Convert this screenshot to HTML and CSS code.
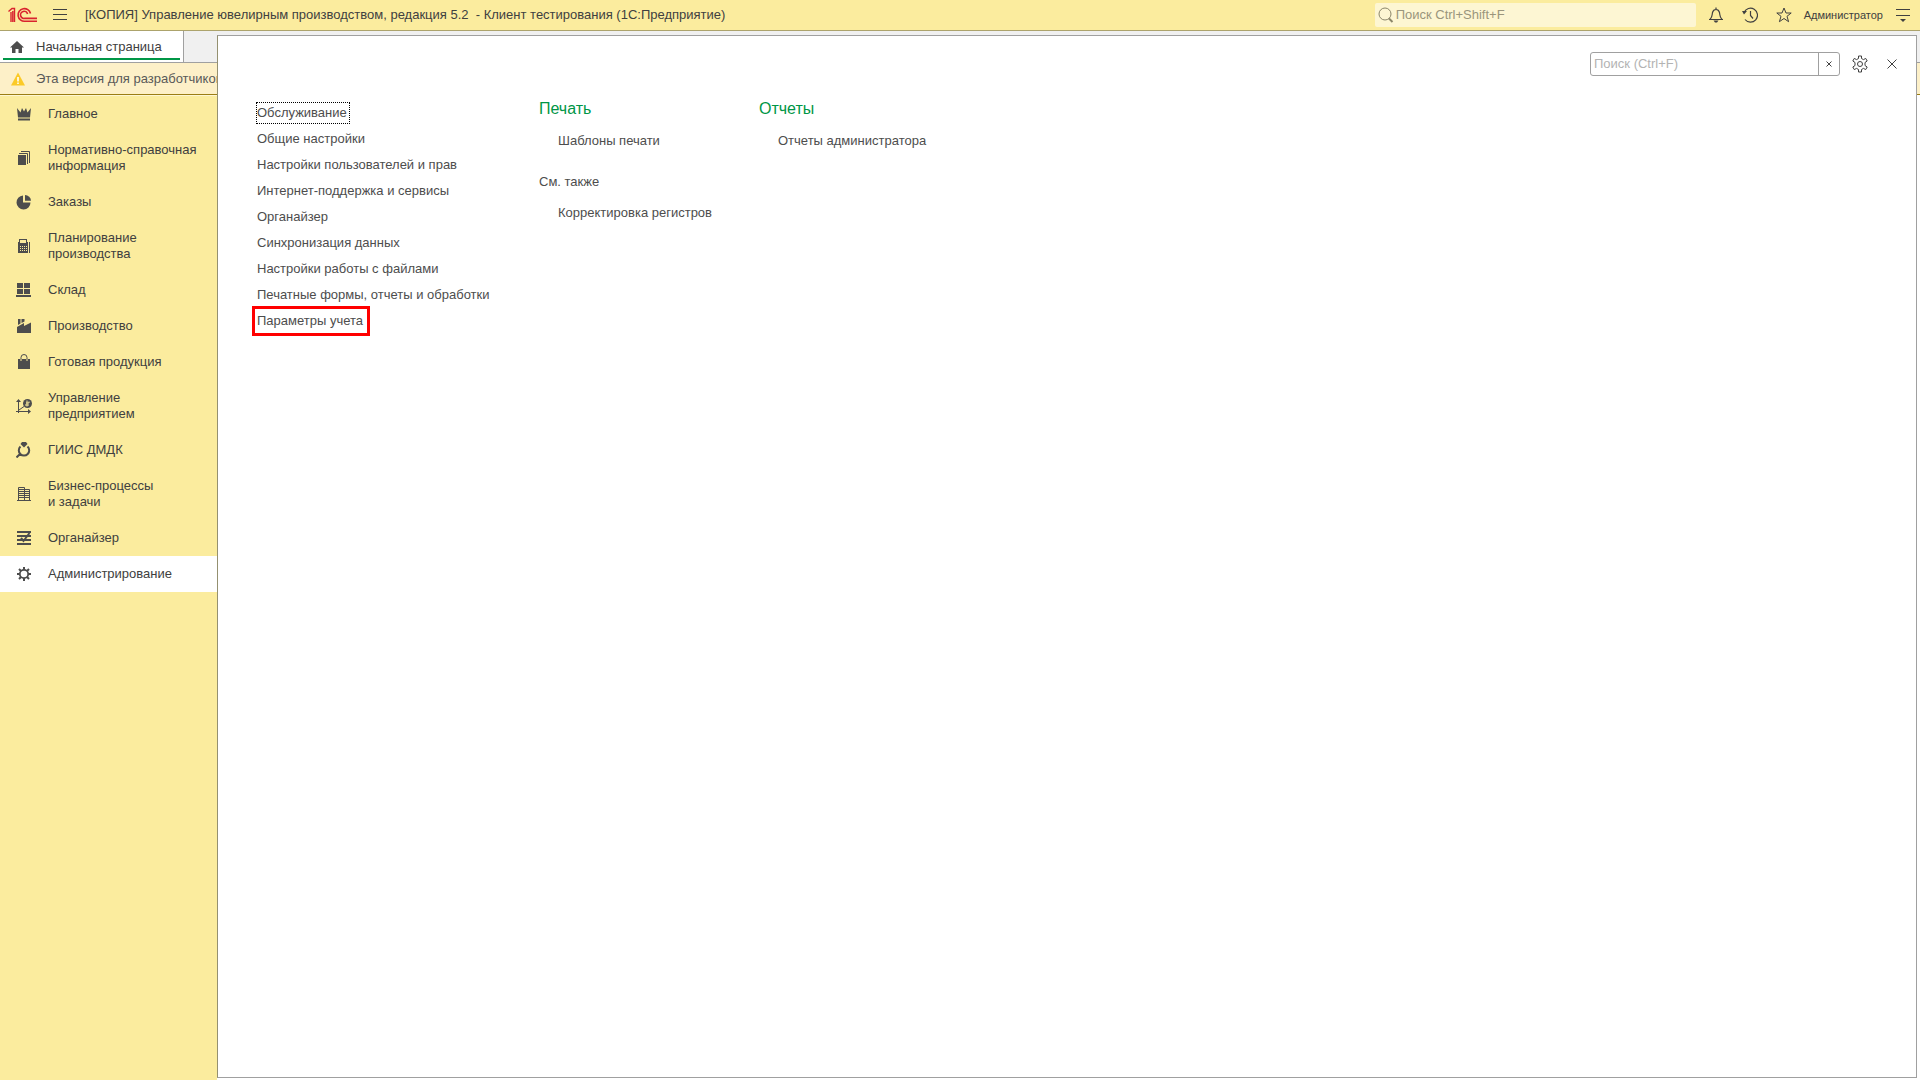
FILE: index.html
```html
<!DOCTYPE html>
<html lang="ru">
<head>
<meta charset="utf-8">
<title>Управление ювелирным производством</title>
<link rel="stylesheet" href="styles.css">
</head>
<body>
<header class="titlebar">
  <svg class="logo" width="30" height="16" viewBox="0 0 30 16" aria-label="1С">
    <g fill="none" stroke="#d9232e" stroke-width="1.6">
      <path d="M0.5 4.5 4 1.5H6.500V15M3 5V15M4.800 4V15" stroke-width="1.400"/>
      <path d="M22.500 6.500A6.300 6.300 0 1 0 17 14.200H29"/>
      <path d="M19.600 7A3.600 3.600 0 1 0 17 11.400H29"/>
    </g>
  </svg>
  <button class="icon-btn menu-btn" aria-label="Меню">
    <svg width="14" height="12" viewBox="0 0 14 12"><path d="M0 .5H14M0 5.5H14M0 10.5H14" stroke="#404040"/></svg>
  </button>
  <h1 class="app-title">[КОПИЯ] Управление ювелирным производством, редакция 5.2&nbsp; - Клиент тестирования (1С:Предприятие)</h1>
  <label class="global-search">
    <svg width="16" height="16" viewBox="0 0 16 16" fill="none" stroke="#8b866a"><circle cx="7" cy="7" r="6"/><path d="M11 11.5 14.5 15" stroke-width="2"/></svg>
    <input type="search" placeholder="Поиск Ctrl+Shift+F" aria-label="Поиск">
  </label>
  <nav class="tools">
    <button class="icon-btn" aria-label="Уведомления">
      <svg width="16" height="16" viewBox="0 0 16 16" fill="none" stroke="#404040"><path d="M1 12.500H15M2 12.500C4.500 10 4 8 4.500 5.500C5 3.500 6.500 2.500 8 2.500S11 3.500 11.500 5.500C12 8 11.500 10 14 12.500M8 .5V2.500" stroke-width="1.200"/><path d="M5.500 13.500H10.500L9 15.500H7Z" fill="#404040" stroke="none"/></svg>
    </button>
    <button class="icon-btn" aria-label="История">
      <svg width="16" height="16" viewBox="0 0 16 16" fill="none" stroke="#404040"><path d="M2 5.500A7 7 0 1 1 3 12.500M8.500 4V8.500L11 11.500" stroke-width="1.200"/><path d="M0 4H5L2 7.500Z" fill="#404040" stroke="none"/></svg>
    </button>
    <button class="icon-btn" aria-label="Избранное">
      <svg width="16" height="16" viewBox="0 0 16 16" fill="none" stroke="#404040"><path d="M8 1 10 6H15.200L11 9.300 12.600 14.700 8 11.500 3.400 14.700 5 9.300 .8 6H6Z"/></svg>
    </button>
    <a class="user" href="#">Администратор</a>
    <button class="icon-btn" aria-label="Сервис">
      <svg width="16" height="16" viewBox="0 0 16 16"><path d="M1 2.500H15M1 8.500H15" stroke="#404040"/><path d="M5 12H11L8 15Z" fill="#404040"/></svg>
    </button>
  </nav>
</header>

<div class="tabs">
  <a class="tab" href="#">
    <svg width="14" height="12" viewBox="0 0 14 12" fill="#4d4d4d"><path d="M7 0 14 6.500H12V12H8.500V8H5.500V12H2V6.500H0Z"/></svg>
    <span>Начальная страница</span>
  </a>
</div>

<div class="warning">
  <svg width="14" height="14" viewBox="0 0 14 14"><path d="M7 .5 14 13.500H0Z" fill="#fbca28"/><path d="M7 5V9.500M7 10.500V12" stroke="#fff" stroke-width="1.600"/></svg>
  <span>Эта версия для разработчиков</span>
</div>

<nav class="sections">
  <a class="section" href="#"><svg viewBox="0 0 16 16"><path d="M1 2 4.500 6.500 6 2 8 5.500 10 2 11.500 6.500 15 2 14 11.500H2ZM2 12.500H14V14.500H2Z"/></svg><span>Главное</span></a>
  <a class="section" href="#"><svg viewBox="0 0 16 16"><path d="M2 5H10V15H2Z"/><path d="M3 3.500H11.500V14M5 1.500H13.500V13" fill="none" stroke="#4d4d4d"/></svg><span>Нормативно-справочная информация</span></a>
  <a class="section" href="#"><svg viewBox="0 0 16 16"><path d="M7 1.500V8.500H14.500A7 7 0 1 1 7 1.500Z"/><path d="M9 1A6 6 0 0 1 15 6.800H9Z"/></svg><span>Заказы</span></a>
  <a class="section" href="#"><svg viewBox="0 0 16 16"><path fill-rule="evenodd" d="M3 1H11V4H12V15H2V4H3ZM4 2V5H10V2ZM4 8V9H5V8ZM6 8V9H7V8ZM8 8V9H9V8ZM10 8V9H11V8ZM4 10V11H5V10ZM6 10V11H7V10ZM8 10V11H9V10ZM10 10V11H11V10ZM4 12V13H5V12ZM6 12V13H7V12ZM8 12V13H9V12ZM10 12V13H11V12Z"/><path d="M13 4H14V15H13Z"/></svg><span>Планирование производства</span></a>
  <a class="section" href="#"><svg viewBox="0 0 16 16"><path d="M1 1H7V6H1ZM8 1H14V6H8ZM1 7H7V12H1ZM8 7H14V12H8ZM0 13H15V15H0Z"/></svg><span>Склад</span></a>
  <a class="section" href="#"><svg viewBox="0 0 16 16"><path d="M1 15V9L8 5V8L15 4.500V15ZM2 1H4.500V5.500L2 7ZM5.500 1H8.500V3.500L5.500 5Z"/></svg><span>Производство</span></a>
  <a class="section" href="#"><svg viewBox="0 0 16 16"><path d="M2 5H14V15H2Z"/><path d="M5 5V3.500A3 3 0 0 1 11 3.500V5" fill="none" stroke="#4d4d4d"/><path d="M5 5V7M11 5V7" stroke="#fbec9e"/></svg><span>Готовая продукция</span></a>
  <a class="section" href="#"><svg viewBox="0 0 16 16"><path d="M2.500 2V15M0 13.500H14M3 12 8 8.500" fill="none" stroke="#4d4d4d"/><path d="M0 4 2.500 1 5 4ZM12 11 15 13.500 12 16Z"/><circle cx="11.500" cy="5.500" r="4.500"/><path d="M11 2.500V8.500M13 3.500V5H10M13 7H9" stroke="#fbec9e" fill="none"/></svg><span>Управление предприятием</span></a>
  <a class="section" href="#"><svg viewBox="0 0 16 16"><path d="M6 0H10L11.500 2 8 5.500 4.500 2Z"/><path d="M4.500 4.500A5.200 5.200 0 1 0 11.500 4.500M4 12 .5 15.500" fill="none" stroke="#4d4d4d" stroke-width="2"/></svg><span>ГИИС ДМДК</span></a>
  <a class="section" href="#"><svg viewBox="0 0 16 16"><path d="M2.500 15V1.500H8.500V15M9 3.500H13.500V15M1 14.500H15M2 3.500H8M2 5.500H8M2 7.500H8M2 9.500H8M2 11.500H8M9 5.500H13M9 7.500H13M9 9.500H13M9 11.500H13" fill="none" stroke="#4d4d4d"/></svg><span>Бизнес-процессы<br>и задачи</span></a>
  <a class="section" href="#"><svg viewBox="0 0 16 16"><path d="M1 2H15M1 6H15M1 10H15M1 14H15" stroke="#4d4d4d" stroke-width="1.800"/><path d="M5 8 7.500 11 13.500 3" fill="none" stroke="#4d4d4d" stroke-width="2"/></svg><span>Органайзер</span></a>
  <a class="section active" href="#" aria-current="page"><svg viewBox="0 0 16 16"><g fill="none" stroke="#4d4d4d"><circle cx="8" cy="8" r="4.200" stroke-width="1.800"/><path d="M8 1V4M8 12V15M1 8H4M12 8H15M3 3 5.200 5.200M10.800 10.800 13 13M3 13 5.200 10.800M10.800 5.200 13 3" stroke-width="2"/></g></svg><span>Администрирование</span></a>
</nav>

<main class="panel">
  <form class="panel-tools">
    <div class="panel-search">
      <input type="text" placeholder="Поиск (Ctrl+F)" aria-label="Поиск в разделе">
      <button type="button" aria-label="Очистить"><svg width="6" height="6" viewBox="0 0 6 6"><path d="M.5.5 5.500 5.500M5.500.5.5 5.500" stroke="#404040"/></svg></button>
    </div>
    <button type="button" class="icon-btn" aria-label="Настройки">
      <svg width="16" height="18" viewBox="0 0 16 18" fill="none" stroke="#404040"><path d="M6.500 1H9.500V3.500L11.500 4.600 13.700 3.400 15.200 6 13 7.500V10.500L15.200 12 13.700 14.600 11.500 13.400 9.500 14.500V17H6.500V14.500L4.500 13.400 2.300 14.600.8 12 3 10.500V7.500L.8 6 2.300 3.400 4.500 4.600 6.500 3.500Z"/><circle cx="8" cy="9" r="2.500"/></svg>
    </button>
    <button type="button" class="icon-btn" aria-label="Закрыть">
      <svg width="10" height="10" viewBox="0 0 10 10"><path d="M.5.5 9.500 9.500M9.500.5.5 9.500" stroke="#404040"/></svg>
    </button>
  </form>
  <div class="columns">
    <ul class="links">
      <li><a class="focused" href="#">Обслуживание</a></li>
      <li><a href="#">Общие настройки</a></li>
      <li><a href="#">Настройки пользователей и прав</a></li>
      <li><a href="#">Интернет-поддержка и сервисы</a></li>
      <li><a href="#">Органайзер</a></li>
      <li><a href="#">Синхронизация данных</a></li>
      <li><a href="#">Настройки работы с файлами</a></li>
      <li><a href="#">Печатные формы, отчеты и обработки</a></li>
      <li><a class="marked" href="#">Параметры учета</a></li>
    </ul>
    <div class="col-group">
      <h2>Печать</h2>
      <a href="#">Шаблоны печати</a>
      <h3>См. также</h3>
      <a href="#">Корректировка регистров</a>
    </div>
    <div class="col-group">
      <h2>Отчеты</h2>
      <a href="#">Отчеты администратора</a>
    </div>
  </div>
</main>
</body>
</html>
```
FILE: styles.css
```css
* { box-sizing: border-box; }

body {
  margin: 0;
  min-height: 100vh;
  position: relative;
  display: flex;
  flex-direction: column;
  background: #fff;
  color: #404040;
  font: 13px/16px "Liberation Sans", Arial, sans-serif;
}

a { color: inherit; text-decoration: none; }
svg { display: block; flex: none; }
input, button { font: inherit; color: inherit; }

.icon-btn {
  display: flex;
  align-items: center;
  justify-content: center;
  padding: 0;
  border: 0;
  background: none;
}

.titlebar {
  display: flex;
  align-items: center;
  height: 31px;
  padding: 0 9px 0 8px;
  background: #fbec9e;
  border-bottom: 1px solid #aca36c;
}
.menu-btn { margin: 0 18px 0 15px; }
.app-title {
  flex: 1;
  margin: 0;
  font-size: 13px;
  font-weight: 400;
  white-space: pre;
}
.global-search {
  display: flex;
  align-items: center;
  width: 321px;
  height: 24px;
  padding: 0 3px;
  background: #fdf6d3;
  border-radius: 2px;
}
.global-search input {
  flex: 1;
  min-width: 0;
  padding: 0 2px;
  border: 0;
  background: none;
}
.global-search input::placeholder { color: #9a957c; opacity: 1; }
.tools {
  display: flex;
  align-items: center;
  gap: 18px;
  margin-left: 12px;
}
.user { font-size: 11px; margin: 0 -6px; }

.tabs {
  display: flex;
  height: 32px;
  background: #f0f0f0;
  border-bottom: 1px solid #a0a0a0;
}
.tab {
  display: flex;
  align-items: center;
  gap: 12px;
  width: 184px;
  padding-left: 10px;
  background: linear-gradient(#009646, #009646) 3px 27px / 177px 2px no-repeat #fff;
  border-right: 1px solid #a0a0a0;
}

.warning {
  display: flex;
  align-items: center;
  gap: 11px;
  height: 32px;
  padding-left: 11px;
  background: #fdf0c8;
  border-bottom: 1px solid #9b7d14;
  color: #595959;
}

.sections {
  flex: 1;
  width: 217px;
  background: #fbec9e;
  border-top: 1px solid #fdf6d3;
}
.section {
  display: flex;
  align-items: center;
  gap: 16px;
  padding: 10px 8px 10px 16px;
}
.section svg { width: 16px; height: 16px; fill: #4d4d4d; }
.section.active { background: #fff; }

.panel {
  position: absolute;
  inset: 35px 3px 2px 217px;
  background: #fff;
  border: 1px solid #a0a0a0;
  border-left-color: #949070;
}
.panel-tools {
  display: flex;
  align-items: center;
  justify-content: flex-end;
  gap: 12px;
  padding: 16px 19px 0 0;
}
.panel-tools .icon-btn:last-child { margin-left: 7px; }
.panel-search {
  display: flex;
  width: 250px;
  height: 24px;
  border: 1px solid #a0a0a0;
  border-radius: 3px;
}
.panel-search input {
  flex: 1;
  min-width: 0;
  padding: 0 3px;
  border: 0;
  background: none;
}
.panel-search input::placeholder { color: #b3b3b3; opacity: 1; }
.panel-search button {
  display: flex;
  align-items: center;
  justify-content: center;
  width: 21px;
  padding: 0;
  border: 0;
  border-left: 1px solid #a0a0a0;
  background: none;
}

.columns {
  display: grid;
  grid-template-columns: 282px 220px 1fr;
  padding: 23px 39px;
  color: #4d4d4d;
}
.links {
  margin: 0;
  padding: 2px 0 0;
  list-style: none;
}
.links li { height: 26px; padding-top: 2px; }
.links a { display: inline-block; line-height: 20px; padding-right: 2px; }
.focused { outline: 1px dotted #000; }
.marked { outline: 3px solid #f00; outline-offset: 2px; }
.col-group {
  display: flex;
  flex-direction: column;
  align-items: flex-start;
}
.col-group h2 {
  margin: 0 0 14px;
  color: #009646;
  font-size: 16px;
  line-height: 20px;
  font-weight: 400;
}
.col-group h3 {
  margin: 25px 0 15px;
  font-size: 13px;
  font-weight: 400;
}
.col-group a { margin-left: 19px; }
```
